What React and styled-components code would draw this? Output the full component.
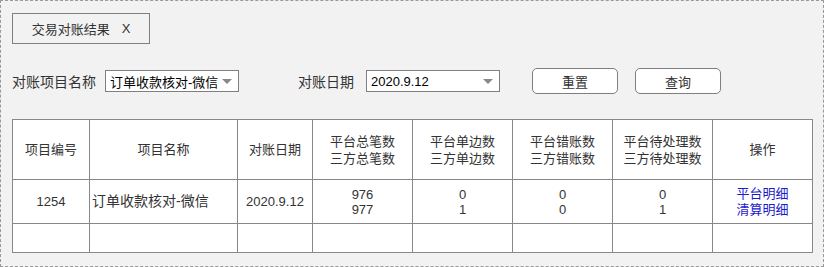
import styled, { createGlobalStyle } from 'styled-components';

const GlobalStyle = createGlobalStyle`
  body {
    margin: 0;
    font-family: "Liberation Sans", "Noto Sans CJK SC", sans-serif;
    color: #333;
  }
`

const Frame = styled.div`
  box-sizing: border-box;
  width: 824px;
  height: 267px;
  padding: 12px 0 0 11px;
  background: #f2f2f2;
  border: 1px dashed #999;
`

const Tab = styled.div`
  box-sizing: border-box;
  display: flex;
  align-items: center;
  justify-content: center;
  gap: 12px;
  width: 138px;
  height: 31px;
  font-size: 13px;
  color: #333;
  border: 1px solid #7f7f7f;
`

const FilterRow = styled.div`
  display: flex;
  align-items: center;
  height: 26px;
  margin-top: 24px;
  font-size: 14px;
`

const Label = styled.span`
  margin-right: ${(p) => p.gap}px;
  color: #333;
`

const Select = styled.div`
  box-sizing: border-box;
  display: flex;
  align-items: center;
  justify-content: space-between;
  width: 134px;
  height: 22px;
  padding: 0 6px 0 4px;
  margin-right: ${(p) => p.gap}px;
  background: #fff;
  border: 1px solid #7f7f7f;
  font-size: 13px;
  color: #000;
  white-space: nowrap;
`

const Caret = styled.span`
  flex-shrink: 0;
  width: 0;
  height: 0;
  border-left: 5px solid transparent;
  border-right: 5px solid transparent;
  border-top: 5px solid #888;
`

const Button = styled.button`
  box-sizing: border-box;
  width: 86px;
  height: 26px;
  margin-right: ${(p) => p.gap}px;
  padding: 0;
  background: #fff;
  border: 1px solid #7f7f7f;
  border-radius: 5px;
  font-family: inherit;
  font-size: 13px;
  color: #333;
`

const Table = styled.table`
  margin-top: 25px;
  width: 801px;
  border-collapse: collapse;
  table-layout: fixed;
  background: #fff;
  font-size: 13px;
  color: #333;

  th, td {
    border: 1px solid #888;
    text-align: center;
    padding: 0;
    line-height: 15px;
  }

  th {
    font-weight: normal;
    height: 59px;
    line-height: 17px;
  }
`

const Row = styled.tr`
  height: ${(p) => p.h}px;
`

const NameCell = styled.td`
  && {
    text-align: left;
    padding-left: 2px;
    font-size: 14px;
  }
`

const Link = styled.a`
  display: block;
  color: #1c1ccc;
  text-decoration: none;
  font-size: 13px;
  line-height: 16px;
`

const widths = [77, 148, 75, 100, 100, 100, 100, 100];

export default function App() {
  return (
    <>
      <GlobalStyle />
      <Frame>
        <Tab>
          <span>交易对账结果</span>
          <span>X</span>
        </Tab>

        <FilterRow>
          <Label gap={9}>对账项目名称</Label>
          <Select gap={59}>
            订单收款核对-微信
            <Caret />
          </Select>
          <Label gap={12}>对账日期</Label>
          <Select gap={32}>
            2020.9.12
            <Caret />
          </Select>
          <Button gap={17}>重置</Button>
          <Button>查询</Button>
        </FilterRow>

        <Table>
          <colgroup>
            {widths.map((w, i) => (
              <col key={i} style={{ width: w }} />
            ))}
          </colgroup>
          <thead>
            <tr>
              <th>项目编号</th>
              <th>项目名称</th>
              <th>对账日期</th>
              <th>平台总笔数<br />三方总笔数</th>
              <th>平台单边数<br />三方单边数</th>
              <th>平台错账数<br />三方错账数</th>
              <th>平台待处理数<br />三方待处理数</th>
              <th>操作</th>
            </tr>
          </thead>
          <tbody>
            <Row h={44}>
              <td>1254</td>
              <NameCell>订单收款核对-微信</NameCell>
              <td>2020.9.12</td>
              <td>976<br />977</td>
              <td>0<br />1</td>
              <td>0<br />0</td>
              <td>0<br />1</td>
              <td>
                <Link href="#">平台明细</Link>
                <Link href="#">清算明细</Link>
              </td>
            </Row>
            <Row h={29}>
              <td /><td /><td /><td /><td /><td /><td /><td />
            </Row>
          </tbody>
        </Table>
      </Frame>
    </>
  );
}
